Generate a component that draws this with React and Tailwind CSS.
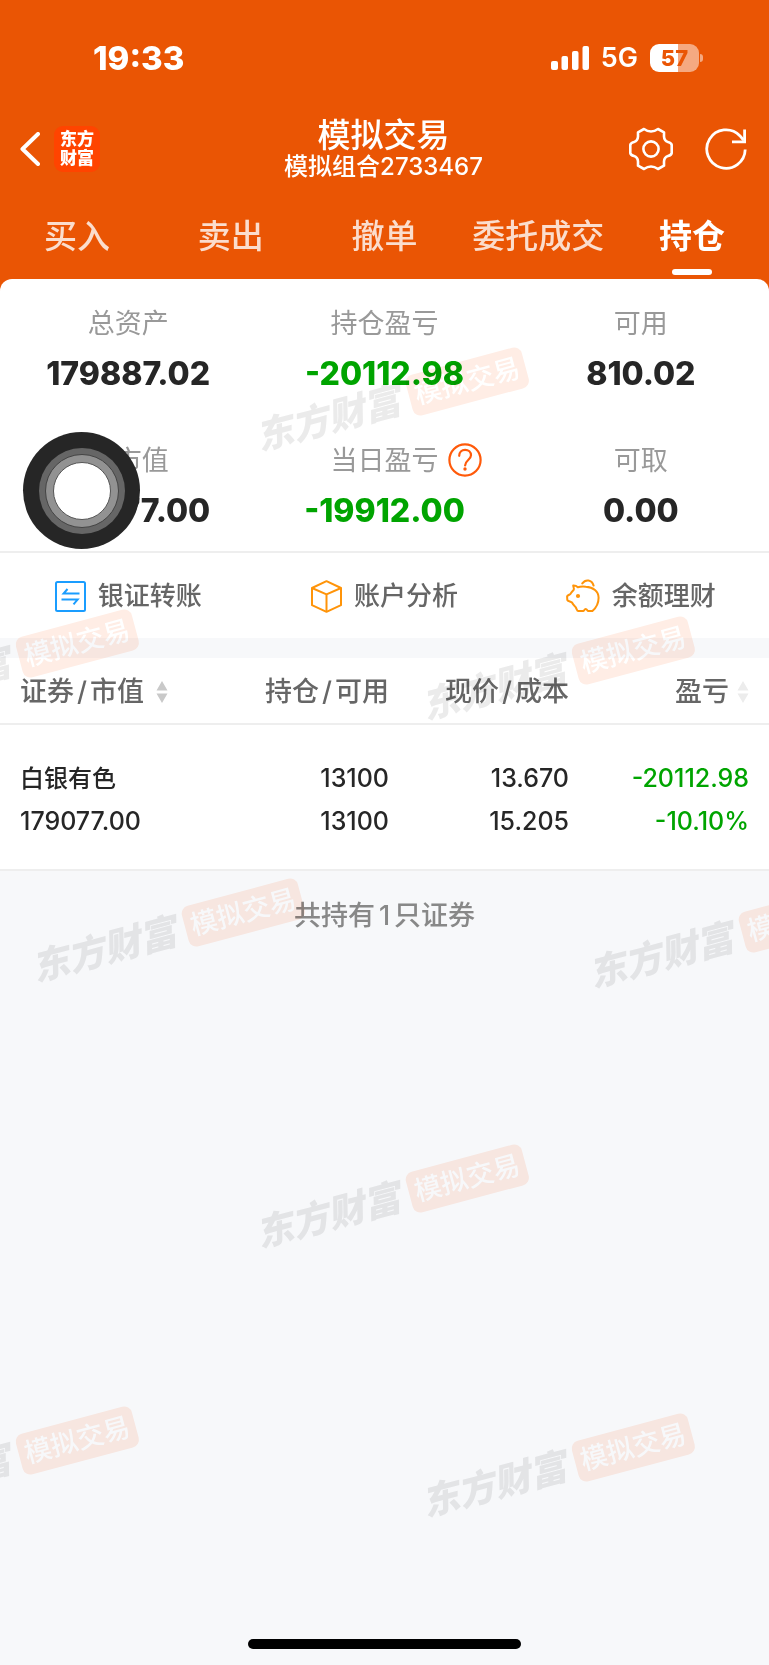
import React from "react";

const TABS = ["买入", "卖出", "撤单", "委托成交", "持仓"];

const STATS = [
  { label: "总资产", value: "179887.02" },
  { label: "持仓盈亏", value: "-20112.98", down: true },
  { label: "可用", value: "810.02" },
  { label: "总市值", value: "179077.00" },
  { label: "当日盈亏", value: "-19912.00", down: true, help: true },
  { label: "可取", value: "0.00" },
];

const ACTIONS = [
  { label: "银证转账", Icon: TransferIcon },
  { label: "账户分析", Icon: CubeIcon },
  { label: "余额理财", Icon: PiggyIcon },
];

const POSITIONS = [
  {
    name: "白银有色",
    marketValue: "179077.00",
    held: "13100",
    available: "13100",
    price: "13.670",
    cost: "15.205",
    profit: "-20112.98",
    profitPct: "-10.10%",
  },
];

// centre points of the repeated watermark
const WATERMARKS = [
  "left-[391px] top-[402px]",
  "left-[1px] top-[664px]",
  "left-[557px] top-[671px]",
  "left-[167px] top-[933px]",
  "left-[724px] top-[939px]",
  "left-[391px] top-[1199px]",
  "left-[1px] top-[1461px]",
  "left-[557px] top-[1468px]",
];

function SignalIcon() {
  return (
    <svg width="38" height="26" viewBox="0 0 38 26" fill="#fff" aria-hidden="true">
      <rect x="0" y="16" width="7" height="9" rx="2" />
      <rect x="10.5" y="11" width="6.5" height="14" rx="2" />
      <rect x="21" y="6" width="6.5" height="19" rx="2" />
      <rect x="31.5" y="1" width="6.5" height="24" rx="2" />
    </svg>
  );
}

function Battery() {
  return (
    <div className="flex items-center gap-px">
      <div className="flex h-7 w-[49px] items-center justify-center rounded-[9px] bg-linear-to-r from-white from-58% to-[#f5a981] to-58% text-[22px] font-extrabold text-[#ea5504]">
        57
      </div>
      <div className="h-2 w-[3px] rounded-r-full bg-[#f5a981]" />
    </div>
  );
}

function BackIcon() {
  return (
    <svg width="20" height="34" viewBox="0 0 20 34" fill="none" aria-hidden="true">
      <path d="M18 2 2.5 17 18 32" stroke="#fff" strokeWidth="4" strokeLinecap="round" strokeLinejoin="round" />
    </svg>
  );
}

function GearIcon() {
  return (
    <svg width="44" height="44" viewBox="0 0 44 44" fill="none" stroke="#fff" strokeWidth="2.6" strokeLinejoin="round" aria-hidden="true">
      <path d="M15 2Q22 7 29 2L35 5.300V9.500Q35.200 13.800 39 15 42.500 16 42.700 18V26Q42.500 28 39 29 35.200 30.200 35 34.500V38.700L29 42Q22 37 15 42L9 38.700V34.500Q8.800 30.200 5 29 1.500 28 1.300 26V18Q1.500 16 5 15 8.800 13.800 9 9.500V5.300Z" />
      <circle cx="22" cy="22" r="7.6" />
    </svg>
  );
}

function RefreshIcon() {
  return (
    <svg width="42" height="42" viewBox="0 0 42 42" fill="none" stroke="#fff" strokeWidth="2.8" aria-hidden="true">
      <path d="M40.2 21.5A19.2 19.2 0 1 1 34.8 7.7L38.5 12" />
      <path d="M39.6 1.5V13.8H27" />
    </svg>
  );
}

function HelpIcon() {
  return (
    <svg width="34" height="34" viewBox="0 0 34 34" fill="none" stroke="#ff5a0a" strokeWidth="2.2" aria-hidden="true">
      <circle cx="17" cy="17" r="15.6" />
      <path d="M11.2 12.8c0-3.6 2.5-5.9 5.9-5.9s5.900 2.200 5.900 5.400c0 4.600-5.900 4.900-5.900 10.200" strokeLinecap="round" />
      <circle cx="17" cy="26" r="1.7" fill="#ff5a0a" stroke="none" />
    </svg>
  );
}

function TransferIcon() {
  return (
    <svg width="31" height="31" viewBox="0 0 31 31" fill="none" stroke="#1a9dff" strokeWidth="2" aria-hidden="true">
      <rect x="1" y="1" width="29" height="29" rx="1.5" />
      <path d="M12.5 8 8.6 12.5H24.5M6.5 18.6H22.6L18.5 23.3" />
    </svg>
  );
}

function CubeIcon() {
  return (
    <svg width="31" height="33" viewBox="0 0 31 33" fill="none" stroke="#ff9409" strokeWidth="2" strokeLinejoin="round" aria-hidden="true">
      <path d="M15.5 1.2 30 8V25.2L15.5 31.8 1 25.2V8Z" />
      <path d="M1 8 15.5 14.4 30 8M15.5 14.4V31.8" />
    </svg>
  );
}

function PiggyIcon() {
  return (
    <svg width="34" height="34" viewBox="0 0 34 34" fill="none" stroke="#ff9409" strokeWidth="2" strokeLinecap="round" strokeLinejoin="round" aria-hidden="true">
      <path d="M7.2 6.6c1.8-.1 3.4.5 4.6 1.7 2-.7 4.8-.9 8-.6 7.400.5 12.800 4.500 12.800 11 0 5.300-2.500 10.100-6.200 13.300h-4.200c-.9 0-1-2-2.500-2s-1.500 2-2.500 2h-5c-1.300 0-1.500-2.400-2.600-3.800-1.300-1.500-2.700-2.700-3.600-4.700-1-1-4.500-1.200-4.700-2.500l-.2-3.600c.2-1.200 2.800-1.500 3.700-3 .9-1.700 2-2.300 3-3.800.5-1.400-.6-2.600-.6-4Z" />
      <path d="M16.300 4.400c3.300-4.500 9.500-3.800 11.300 2.200" />
      <circle cx="12" cy="17" r="2.1" fill="#ff9409" stroke="none" />
    </svg>
  );
}

function SortIcon({ faded }) {
  return (
    <svg width="12" height="24" viewBox="0 0 12 24" fill={faded ? "#ececec" : "#c9c9c9"} aria-hidden="true">
      <path d="M6 1 11.500 10.500H.5ZM6 23 .5 13.500H11.500Z" />
    </svg>
  );
}

function Watermark({ place }) {
  return (
    <div className={`absolute flex -translate-x-1/2 -translate-y-1/2 -rotate-15 items-center gap-[10px] whitespace-nowrap ${place}`}>
      <span className="text-[37px]/[42px] font-black italic text-[#ebebeb]">东方财富</span>
      <span className="rounded-lg bg-[#ffede5] px-[6px] text-[27px]/[42px] font-medium text-white">
        模拟交易
      </span>
    </div>
  );
}

function Header() {
  return (
    <header className="text-white">
      <div className="flex h-[75px] items-end justify-between pr-[66px] pl-[93px]">
        <div className="text-[33px]/[34px] font-extrabold">19:33</div>
        <div className="flex h-[34px] items-center gap-3">
          <SignalIcon />
          <span className="text-[27px]/[34px] font-semibold">5G</span>
          <Battery />
        </div>
      </div>

      <div className="grid grid-cols-[1fr_auto_1fr] items-center pt-[42px] pr-[22px] pl-5">
        <div className="flex items-center gap-[14px]">
          <button type="button" aria-label="返回">
            <BackIcon />
          </button>
          <div className="flex size-[46px] flex-col items-center justify-center rounded-[9px] bg-[#ff4400] text-[17px]/[19px] font-black">
            <span>东方</span>
            <span>财富</span>
          </div>
        </div>
        <div className="text-center">
          <h1 className="text-[33px]/[36px] font-medium">模拟交易</h1>
          <p className="text-[24px]/[28px] font-medium">模拟组合2733467</p>
        </div>
        <div className="flex items-center justify-end gap-8">
          <button type="button" aria-label="设置">
            <GearIcon />
          </button>
          <button type="button" aria-label="刷新">
            <RefreshIcon />
          </button>
        </div>
      </div>

      <nav className="grid grid-cols-5 pt-[35px] pb-1">
        {TABS.map((tab) => {
          const active = tab === "持仓";
          return (
            <a key={tab} href="#" className="flex flex-col items-center gap-[13px]">
              <span className={`text-[33px]/[40px] ${active ? "font-bold" : "font-medium text-white/80"}`}>{tab}</span>
              {active && <span className="h-[6px] w-10 rounded-full bg-white" />}
            </a>
          );
        })}
      </nav>
    </header>
  );
}

function Stat({ label, value, down, help }) {
  return (
    <div className="flex flex-col items-center gap-3">
      <div className="relative text-[27px]/[36px] text-[#999]">
        {label}
        {help && (
          <button type="button" aria-label="说明" className="absolute top-0 left-full ml-[10px]">
            <HelpIcon />
          </button>
        )}
      </div>
      <div className={`text-[32px]/[40px] font-extrabold ${down ? "text-[#00a400]" : "text-[#262626]"}`}>
        {value}
      </div>
    </div>
  );
}

function PairLabel({ first, second }) {
  return (
    <span>
      {first}
      <span className="mx-[3px]">/</span>
      {second}
    </span>
  );
}

function PositionTable() {
  return (
    <table className="w-full table-fixed border-b-2 border-[#eee] bg-white text-right">
      <thead className="border-b-2 border-[#eee] text-[27px]/[36px] text-[#666]">
        <tr>
          <th className="pt-4 pb-[13px] pl-5 text-left font-medium">
            <button type="button" className="flex items-center gap-3">
              <PairLabel first="证券" second="市值" />
              <SortIcon />
            </button>
          </th>
          <th className="w-[180px] pt-4 pb-[13px] font-medium">
            <PairLabel first="持仓" second="可用" />
          </th>
          <th className="w-[180px] pt-4 pb-[13px] font-medium">
            <PairLabel first="现价" second="成本" />
          </th>
          <th className="w-[200px] pt-4 pr-5 pb-[13px] font-medium">
            <button type="button" className="ml-auto flex items-center gap-2">
              盈亏
              <SortIcon faded />
            </button>
          </th>
        </tr>
      </thead>
      <tbody className="text-[25px]/[43px] font-medium text-[#262626]">
        {POSITIONS.map((p) => (
          <tr key={p.name}>
            <td className="pt-8 pb-[26px] pl-5 text-left">
              <div className="text-[24px]/[43px]">{p.name}</div>
              <div>{p.marketValue}</div>
            </td>
            <td className="pt-8 pb-[26px]">
              <div>{p.held}</div>
              <div>{p.available}</div>
            </td>
            <td className="pt-8 pb-[26px]">
              <div>{p.price}</div>
              <div>{p.cost}</div>
            </td>
            <td className="pt-8 pr-5 pb-[26px] text-[#00a400]">
              <div>{p.profit}</div>
              <div>{p.profitPct}</div>
            </td>
          </tr>
        ))}
      </tbody>
    </table>
  );
}

export default function App() {
  return (
    <div className="relative flex min-h-screen flex-col overflow-hidden bg-[#f7f8fa] font-['Inter','Noto_Sans_CJK_SC',sans-serif]">
      <div className="bg-[#ea5504]">
        <Header />
        <section className="rounded-t-xl bg-white">
          <div className="grid grid-cols-3 gap-y-[49px] border-b-2 border-[#eee] pt-[27px] pb-5">
            {STATS.map((s) => (
              <Stat key={s.label} {...s} />
            ))}
          </div>
          <div className="grid grid-cols-3 pt-[25px] pb-6">
            {ACTIONS.map(({ label, Icon }) => (
              <button
                key={label}
                type="button"
                className="flex items-center justify-center gap-3 text-[26px]/[36px] font-medium text-[#666]"
              >
                <Icon />
                {label}
              </button>
            ))}
          </div>
        </section>
      </div>

      <div className="h-5" />
      <PositionTable />
      <p className="pt-[27px] text-center text-[27px]/[36px] font-medium text-[#888]">
        共持有<span className="mx-1">{POSITIONS.length}</span>只证券
      </p>

      <div className="mx-auto mt-auto mb-4 h-[10px] w-[273px] rounded-full bg-black" />

      {/* multiply keeps the figures solid where the watermark crosses them */}
      <div className="pointer-events-none absolute inset-0 mix-blend-multiply" aria-hidden="true">
        {WATERMARKS.map((place) => (
          <Watermark key={place} place={place} />
        ))}
      </div>

      {/* assistive touch button floating above the page */}
      <button
        type="button"
        aria-label="辅助触控"
        className="absolute top-[432px] left-[23px] flex size-[117px] items-center justify-center rounded-full bg-[#262626]"
      >
        <span className="flex size-[86px] items-center justify-center rounded-full bg-[#666]">
          <span className="flex size-[74px] items-center justify-center rounded-full border border-[#444] bg-[#929292]">
            <span className="size-[58px] rounded-full border border-[#555] bg-white" />
          </span>
        </span>
      </button>
    </div>
  );
}
